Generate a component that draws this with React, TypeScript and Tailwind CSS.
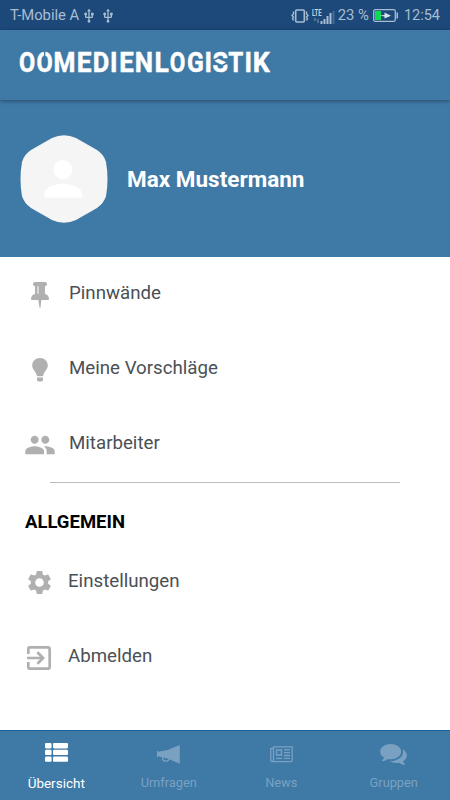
import type { ReactNode } from "react";
import { MdExitToApp, MdPeople, MdPerson, MdSettings, MdUsb } from "react-icons/md";

const PinIcon = () => (
  <svg viewBox="320 128 1152 1664" className="w-[18px] h-[26px]" fill="currentColor">
    <path d="M800 864v-448q0-14-9-23t-23-9-23 9-9 23v448q0 14 9 23t23 9 23-9 9-23zm672 352q0 26-19 45t-45 19h-429l-51 483q-2 12-10.5 20.5t-20.5 8.5h-1q-27 0-32-27l-76-485h-404q-26 0-45-19t-19-45q0-123 78.5-221.5t177.5-98.5v-512q-52 0-90-38t-38-90 38-90 90-38h640q52 0 90 38t38 90-38 90-90 38v512q99 0 177.5 98.5t78.5 221.5z" />
  </svg>
);

const BulbIcon = () => (
  <svg viewBox="0 0 16 24" className="w-4 h-6" fill="currentColor">
    <path d="M8 0C3.6 0 .2 3.3.2 7.5c0 3.8 3.400 5.800 4.500 9.500.2.900.4 1.200 1 1.200h4.600c.6 0 .8-.3 1-1.200 1.100-3.700 4.500-5.700 4.500-9.500C15.800 3.300 12.400 0 8 0z" />
    <path d="M5 19.500h6v2.200c0 1-1 1.800-2 1.800H7c-1 0-2-.8-2-1.800z" />
  </svg>
);

const ListIcon = () => (
  <svg viewBox="0 0 23 19" className="w-[23px] h-[19px]" fill="currentColor">
    {[0, 6.7, 13.4].map((y) => (
      <g key={y}>
        <rect x="0" y={y} width="6.600" height="5.400" rx="1.100" />
        <rect x="8" y={y} width="15" height="5.400" rx="1.100" />
      </g>
    ))}
  </svg>
);

const MegaphoneIcon = () => (
  <svg viewBox="0 0 23 19" className="mt-1 w-[23px] h-[19px]" fill="currentColor">
    <path d="M22.800 0v18.700L10.500 13.500 1.200 11.300v.7H0V6h1.200v.8L10.500 5z" />
    <path d="M5.600 12v1.300q0 2.800 2.800 2.800h1q2.300 0 2.600-2.500" fill="none" stroke="currentColor" strokeWidth="1.300" />
  </svg>
);

const NewsIcon = () => (
  <svg viewBox="0 0 23 17" className="mt-1 w-[23px] h-[17px]" fill="none" stroke="currentColor" strokeWidth="1.300">
    <path d="M3.500 14V.8h18.700v13.400q0 1.400-1.400 1.400H2.200Q.8 15.600.8 14.200V2.500h2.700V14q0 1.500-1.500 1.500" />
    <path d="M6.500 4h5v5h-5zM6 12.300h6M14 3.900h6M14 6.700h6M14 9.500h6M14 12.300h6" />
  </svg>
);

const CommentsIcon = () => (
  <svg viewBox="0 256 1792 1408" className="mt-1 w-[27px] h-[21px]" fill="currentColor">
    <path d="M1408 768q0 139-94 257t-256.5 186.5-353.5 68.5q-86 0-176-16-124 88-278 128-36 9-86 16h-3q-11 0-20.5-8t-11.5-21q-1-3-1-6.5t.5-6.5 2-6l2.5-5 3.5-5.5 4-5 4.500-5 4-4.500q5-6 23-25t26-29.500 22.500-29 25-38.500 20.500-44q-124-72-195-177t-71-224q0-139 94-257t256.500-186.500 353.500-68.500 353.500 68.500 256.500 186.500 94 257zm384 256q0 120-71 224.500t-195 176.500q10 24 20.500 44t25 38.500 22.500 29 26 29.500 23 25q1 1 4 4.500t4.500 5 4 5 3.500 5.500l2.500 5 2 6 .5 6.500-1 6.500q-3 14-13 22t-22 7q-50-7-86-16-154-40-278-128-90 16-176 16-271 0-472-132 58 4 88 4 161 0 309-45t264-129q125-92 192-212t67-254q0-77-23-152 129 71 204 178t75 230z" />
  </svg>
);

const VibrateIcon = () => (
  <svg viewBox="0 0 18 14" className="w-[18px] h-[14px]" fill="none" stroke="currentColor">
    <rect x="4.700" y="1" width="8.600" height="12" rx="1" strokeWidth="1.600" />
    <path d="M2.500 2.500v2.500l-1.500 1.500 1.500 1.500-1 1.500 1 2M15.500 2.500v2.500l1.500 1.500-1.500 1.500 1 1.500-1 2" strokeWidth="1.400" />
  </svg>
);

const SignalIcon = () => (
  <svg viewBox="0 0 24 18" className="w-6 h-[18px]" fill="currentColor">
    <text x="0" y="8.500" fontSize="9" fontWeight="700" fill="#c9d6e3" textLength="9.500" lengthAdjust="spacingAndGlyphs">
      LTE
    </text>
    <path d="M2 11h2v3H2zM5 12h2v4H5z" opacity=".35" />
    <path d="M8.500 14h2v3h-2zM11.500 12h2v5h-2zM14.500 9h2v8h-2zM17.500 6h2v11h-2z" />
    <path d="M20.500 4h2v13h-2z" opacity=".3" />
  </svg>
);

const BatteryIcon = () => (
  <svg viewBox="0 0 26 13" className="w-[26px] h-[13px]">
    <rect x=".7" y=".7" width="21.600" height="11.600" rx="1.500" fill="none" stroke="#a9bdd2" strokeWidth="1.300" />
    <path d="M23.500 3.500H25v6h-1.500z" fill="#a9bdd2" />
    <path d="M2 2h6v9H2z" fill="#08dc53" />
    <path d="M6.500 6.500l5-.5V3.500l6.500 3.300-6.500 2.700V7.500z" fill="#d5e2ec" />
  </svg>
);

// [letter, x, width]
const logoLetters: [string, number, number][] = [
  ["O", -0.9, 16.2],
  ["O", 16.4, 16.2],
  ["M", 33.6, 21.9],
  ["E", 56.8, 14.8],
  ["D", 72.8, 16.5],
  ["I", 89.9, 7.5],
  ["E", 99.2, 14.5],
  ["N", 114.8, 18.3],
  ["L", 134.5, 14.3],
  ["O", 149.8, 15.6],
  ["G", 167, 16.8],
  ["I", 184.5, 7.5],
  ["S", 192.6, 15.5],
  ["T", 208.3, 15],
  ["I", 224.5, 7.5],
  ["K", 232.8, 17],
];

const Logo = () => (
  <svg viewBox="0 0 252 24" className="h-6 w-[252px] overflow-visible" fill="white">
    <text y="21.200" fontSize="28" fontWeight="700" stroke="white" strokeWidth=".5">
      {logoLetters.map(([letter, x, width], i) => (
        <tspan key={i} x={x} textLength={width} lengthAdjust="spacingAndGlyphs">
          {letter}
        </tspan>
      ))}
    </text>
    <path d="M24.600 0v5M192 10l7-3.500M201 15l7-3.500" stroke="#3f79a6" strokeWidth="1.400" />
  </svg>
);

type MenuRow = { label: string; icon: ReactNode };

const mainRows: MenuRow[] = [
  { label: "Pinnwände", icon: <PinIcon /> },
  { label: "Meine Vorschläge", icon: <BulbIcon /> },
  { label: "Mitarbeiter", icon: <MdPeople className="h-8 w-8" /> },
];

const generalRows: MenuRow[] = [
  { label: "Einstellungen", icon: <MdSettings className="h-[29px] w-[29px]" /> },
  { label: "Abmelden", icon: <MdExitToApp className="h-8 w-8" /> },
];

const tabs: MenuRow[] = [
  { label: "Übersicht", icon: <ListIcon /> },
  { label: "Umfragen", icon: <MegaphoneIcon /> },
  { label: "News", icon: <NewsIcon /> },
  { label: "Gruppen", icon: <CommentsIcon /> },
];

export default function App() {
  return (
    <div className="flex h-[800px] w-[450px] flex-col overflow-hidden bg-white font-[Roboto,sans-serif]">
      <div className="flex h-[30px] shrink-0 items-center bg-[#1c4979] pl-2.5 pr-2.5 pt-px text-[14.5px] text-[#a9bdd2]">
        <span className="whitespace-nowrap text-[14.800px]">T-Mobile A</span>
        <MdUsb className="ml-0.5 h-4 w-4" />
        <MdUsb className="ml-[3px] h-4 w-4" />
        <div className="ml-auto flex items-center whitespace-nowrap">
          <VibrateIcon />
          <span className="ml-[3px]"><SignalIcon /></span>
          <span className="ml-0.5 text-[14.800px]">23 %</span>
          <span className="ml-1"><BatteryIcon /></span>
          <span className="ml-[5px] pt-px">12:54</span>
        </div>
      </div>

      <header className="relative h-[70px] shrink-0 bg-[#3f79a6] pl-5 pt-[21px] shadow-[0_1px_4px_rgba(0,0,0,0.4)]">
        <Logo />
      </header>

      <section className="flex h-[157px] shrink-0 items-center bg-[#3f79a6] pl-5">
        <div className="grid h-[88px] w-[88px] place-items-center">
          <svg viewBox="0 0 88 88" className="col-start-1 row-start-1 h-[88px] w-[88px]">
            <path d="M32 3Q44-2.500 56 3L77 15Q84 19.500 86 27Q89 44 86 61Q84 68 77 73L56 85Q44 90.500 32 85L11 73Q4 68 2 61Q-1 44 2 27Q4 19.500 11 15Z" fill="#f5f5f5" />
          </svg>
          <MdPerson className="col-start-1 row-start-1 mr-0.5 h-14 w-14 text-white" />
        </div>
        <h1 className="ml-[19px] pt-[3px] text-[22.500px] font-bold text-white">Max Mustermann</h1>
      </section>

      <main className="flex-1">
        {mainRows.map((row) => (
          <div key={row.label} className="flex h-[75px] items-center">
            <span className="ml-6 flex w-8 justify-center text-[#b0b0b0]">{row.icon}</span>
            <span className="ml-[13px] pb-0.5 text-[18.700px] text-[#4b5055]">{row.label}</span>
          </div>
        ))}
        <div className="mx-[50px] h-px bg-[#bdbdbd]" />
        <h2 className="ml-[25px] mt-[25px] text-[18.500px] leading-7 font-bold text-black">ALLGEMEIN</h2>
        <div className="mt-[9px]">
          {generalRows.map((row) => (
            <div key={row.label} className="flex h-[75px] items-center">
              <span className="ml-[23px] flex w-8 justify-center text-[#b0b0b0]">{row.icon}</span>
              <span className="ml-[13px] pb-0.5 text-[18.700px] text-[#4b5055]">{row.label}</span>
            </div>
          ))}
        </div>
      </main>

      <nav className="grid h-[70px] shrink-0 grid-cols-4 border-t border-[#176399] bg-[#3f79a6]">
        {tabs.map((tab, i) => (
          <div key={tab.label} className={`flex flex-col items-center ${i === 0 ? "text-white" : "text-[#7aa1c1]"}`}>
            <span className="flex h-[42px] items-center">{tab.icon}</span>
            <span className={i === 0 ? "text-[13.500px] leading-5" : "text-[12.800px] leading-5"}>{tab.label}</span>
          </div>
        ))}
      </nav>
    </div>
  );
}
